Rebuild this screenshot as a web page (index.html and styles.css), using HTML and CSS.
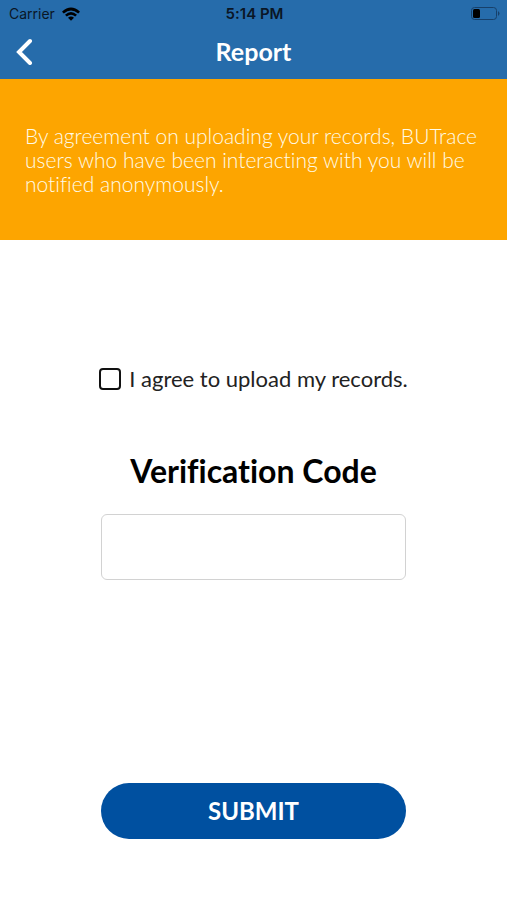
FILE: index.html
```html
<!DOCTYPE html>
<html lang="en">
<head>
<meta charset="utf-8">
<meta name="viewport" content="width=device-width, initial-scale=1">
<title>Report</title>
<link rel="stylesheet" href="styles.css">
</head>
<body>
<header class="header">
  <div class="status">
    <div class="carrier">
      <span>Carrier</span>
      <svg class="wifi" width="20" height="14" viewBox="0 0 20 14" aria-hidden="true">
        <path d="M1 4.700 Q10 -3.500 19 4.700 L17.200 6.500 Q10 0.400 2.800 6.500Z"/>
        <path d="M4 7.700 Q10 2.300 16 7.700 L14.200 9.500 Q10 6 5.800 9.500Z"/>
        <path d="M7 10.700 Q10 8.200 13 10.700 L10 13.800Z"/>
      </svg>
    </div>
    <span class="time">5:14 PM</span>
    <svg class="battery" width="30" height="16" viewBox="0 0 30 16" aria-hidden="true">
      <rect class="battery-case" x="1.500" y="1.500" width="25" height="12" rx="3"/>
      <rect x="3" y="3" width="7" height="9" rx="1.500"/>
      <path class="battery-tip" d="M28 5 Q31 7.500 28 10Z"/>
    </svg>
  </div>
  <div class="nav">
    <button class="back" type="button" aria-label="Back">
      <svg width="18" height="28" viewBox="0 0 18 28" aria-hidden="true"><path d="M14 4 L3 15 L14 26"/></svg>
    </button>
    <h1 class="title">Report</h1>
  </div>
</header>
<p class="notice">By agreement on uploading your records, BUTrace users who have been interacting with you will be notified anonymously.</p>
<form class="form">
  <label class="agree"><input class="check" type="checkbox"><span>I agree to upload my records.</span></label>
  <label class="code-label" for="code">Verification Code</label>
  <input class="code" id="code" type="text">
  <button class="submit" type="button">SUBMIT</button>
</form>
</body>
</html>
```
FILE: styles.css
```css
* {
  box-sizing: border-box;
}

body {
  margin: 0;
  background: #fff;
  color: #000;
  font-family: Lato, sans-serif;
  font-variant-ligatures: none;
}

.header {
  background: #266cab;
}

.status {
  display: grid;
  grid-template-columns: 1fr auto 1fr;
  align-items: center;
  height: 28px;
  padding: 0 7px 0 9px;
  color: #0a1626;
  font-family: Inter, sans-serif;
  font-size: 14px;
  line-height: 28px;
}

.carrier {
  display: flex;
  align-items: center;
  gap: 6px;
}

.time {
  font-size: 15px;
  font-weight: 600;
}

.battery {
  justify-self: end;
}

.battery-case {
  fill: none;
  stroke: #17406a;
}

.battery-tip {
  fill: #17406a;
}

.nav {
  display: grid;
  grid-template-columns: 1fr auto 1fr;
  align-items: center;
  height: 51px;
  padding: 0 16px 5px;
}

.back {
  justify-self: start;
  display: flex;
  padding: 0;
  border: 0;
  background: none;
}

.back path {
  fill: none;
  stroke: #fff;
  stroke-width: 4;
  stroke-linecap: round;
}

.title {
  margin: 0;
  color: #fff;
  font-size: 25px;
  font-weight: 700;
  line-height: 32px;
}

.notice {
  margin: 0;
  padding: 45px 20px 44px 25px;
  background: #fda500;
  color: #fffbe8;
  font-size: 21px;
  font-weight: 300;
  line-height: 24px;
}

.form {
  display: flex;
  flex-direction: column;
  align-items: center;
  padding: 125px 0 60px;
}

.agree {
  display: flex;
  align-items: center;
  gap: 8px;
  color: #222;
  font-size: 22px;
  line-height: 28px;
}

.check {
  appearance: none;
  width: 22px;
  height: 22px;
  margin: 0;
  border: 2px solid #111;
  border-radius: 4px;
  background: #fff;
}

.check:checked {
  background: #0050a0;
}

.code-label {
  margin-top: 58px;
  font-size: 32px;
  font-weight: 700;
  line-height: 40px;
}

.code {
  width: 60%;
  height: 66px;
  margin-top: 23px;
  padding: 0 16px;
  border: 1px solid #d2d2d2;
  border-radius: 6px;
  background: #fff;
  font: inherit;
  font-size: 24px;
}

.submit {
  width: 60%;
  height: 56px;
  margin-top: 203px;
  padding: 0 0 2px;
  border: 0;
  border-radius: 28px;
  background: #0050a0;
  color: #fff;
  font: inherit;
  font-size: 24px;
  font-weight: 700;
}
```
